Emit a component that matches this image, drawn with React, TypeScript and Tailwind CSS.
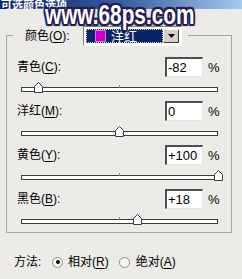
import type { ReactNode } from 'react'

const rows = [
  { name: '青色', key: 'C', value: -82 },
  { name: '洋红', key: 'M', value: 0 },
  { name: '黄色', key: 'Y', value: 100 },
  { name: '黑色', key: 'B', value: 18 },
]

function fmt(v: number) {
  if (v > 0) return `+${v}`
  return `${v}`
}

function Label({ name, k }: { name: string; k: string }) {
  return (
    <span>
      {name}(<span className="underline underline-offset-2">{k}</span>):
    </span>
  )
}

function Slider({ value }: { value: number }) {
  const frac = (value + 100) / 200
  return (
    <div className="relative h-[11px] pt-[5px]">
      <div className="relative ml-[4px] w-[197px] h-[5px] border border-[#3c3c3c] bg-white">
        <div className="absolute left-[97px] top-[-3px] w-px h-[3px] bg-[#808080]" />
      </div>
      {/* thumb */}
      <svg
        className="absolute top-0"
        style={{ left: 4 + frac * 197 - 4.5 }}
        width="9"
        height="11"
        viewBox="0 0 9 11"
      >
        <polygon points="0.5,10.5 0.5,4.5 4.5,0.5 8.5,4.5 8.5,10.5" fill="#fff" stroke="#3c3c3c" />
      </svg>
    </div>
  )
}

function Radio({ checked }: { checked?: boolean }) {
  return (
    <span className="flex items-center justify-center w-[11px] h-[11px] rounded-full border border-[#8a8a86] bg-[#f8f8f6]">
      {checked && <span className="w-[4px] h-[4px] rounded-full bg-black" />}
    </span>
  )
}

function Row({ children, value }: { children: ReactNode; value: number }) {
  return (
    <div className="h-[44px]">
      <div className="flex items-center h-[20px]">
        <div className="w-[148px]">{children}</div>
        <div className="w-[38px] h-[20px] border-t-2 border-l-2 border-r border-b border-t-[#505050] border-l-[#505050] border-r-[#e4e4e0] border-b-[#e4e4e0] bg-white flex items-center pl-[1px] text-[13px] leading-none">
          {fmt(value)}
        </div>
        <span className="ml-[5px] text-[13px]">%</span>
      </div>
      <div className="mt-[5px]">
        <Slider value={value} />
      </div>
    </div>
  )
}

export default function App() {
  return (
    <div className="relative w-[242px] h-[279px] overflow-hidden bg-[#ecebe7] text-[12px] leading-none text-black font-['Liberation_Sans','Noto_Sans_CJK_SC',sans-serif]">
      {/* title bar */}
      <div className="h-[9px] overflow-hidden flex items-end bg-gradient-to-r from-[#0a246a] via-[#3a5c9c] to-[#a6caf0]">
        <span className="pl-[1px] text-white font-bold text-[11px] leading-[11px] mb-[-1px] font-['Noto_Sans_CJK_SC',sans-serif]">
          可选颜色选项
        </span>
      </div>

      {/* watermark */}
      <div className="absolute left-[45px] top-[2px] origin-left scale-x-[0.77] text-[27px] leading-[27px] font-bold text-white whitespace-nowrap [text-shadow:2px_0_0_#221c52,-2px_0_0_#221c52,0_2px_0_#221c52,0_-2px_0_#221c52,1px_1px_0_#221c52,-1px_-1px_0_#221c52,1px_-1px_0_#221c52,-1px_1px_0_#221c52,2px_2px_1px_#221c52,-2px_2px_1px_#221c52,2px_-2px_1px_#221c52,-2px_-2px_1px_#221c52]">
        www.68ps.com
      </div>

      <fieldset className="mt-[17px] ml-[6px] w-[226px] h-[207px] border border-[#a6a5a0] pl-[10px] pr-[6px]">
        <legend className="ml-[-4px] pl-[12px] pr-[6px] flex items-center h-[19px]">
          <span className="w-[58px]">
            颜色(<span className="underline underline-offset-2">O</span>):
          </span>
          <div className="flex w-[99px] h-[20px] border border-t-[#808080] border-l-[#808080] border-r-white border-b-white bg-white p-[2px]">
            <div className="flex-1 flex items-center bg-[#0a246a] border border-dotted border-[#d8d8b0] pl-[8px]">
              <span className="w-[11px] h-[12px] bg-[#c800c8] border border-[#e070e0]" />
              <span className="ml-[5px] text-white text-[13px] font-['Noto_Sans_CJK_SC',sans-serif]">洋红</span>
            </div>
            <div className="w-[16px] flex items-center justify-center bg-[#d4d0c8] border border-t-white border-l-white border-r-[#404040] border-b-[#404040]">
              <svg width="7" height="4" viewBox="0 0 7 4">
                <polygon points="0,0 7,0 3.5,4" fill="#000" />
              </svg>
            </div>
          </div>
        </legend>

        <div className="mt-[12px]">
          {rows.map(r => (
            <Row key={r.key} value={r.value}>
              <Label name={r.name} k={r.key} />
            </Row>
          ))}
        </div>
      </fieldset>

      {/* method */}
      <div className="mt-[22px] pl-[14px] flex items-center h-[14px]">
        <span className="w-[38px]">方法:</span>
        <Radio checked />
        <span className="ml-[5px]">
          相对(<span className="underline underline-offset-2">R</span>)
        </span>
        <span className="ml-[10px]">
          <Radio />
        </span>
        <span className="ml-[6px]">
          绝对(<span className="underline underline-offset-2">A</span>)
        </span>
      </div>
    </div>
  )
}
